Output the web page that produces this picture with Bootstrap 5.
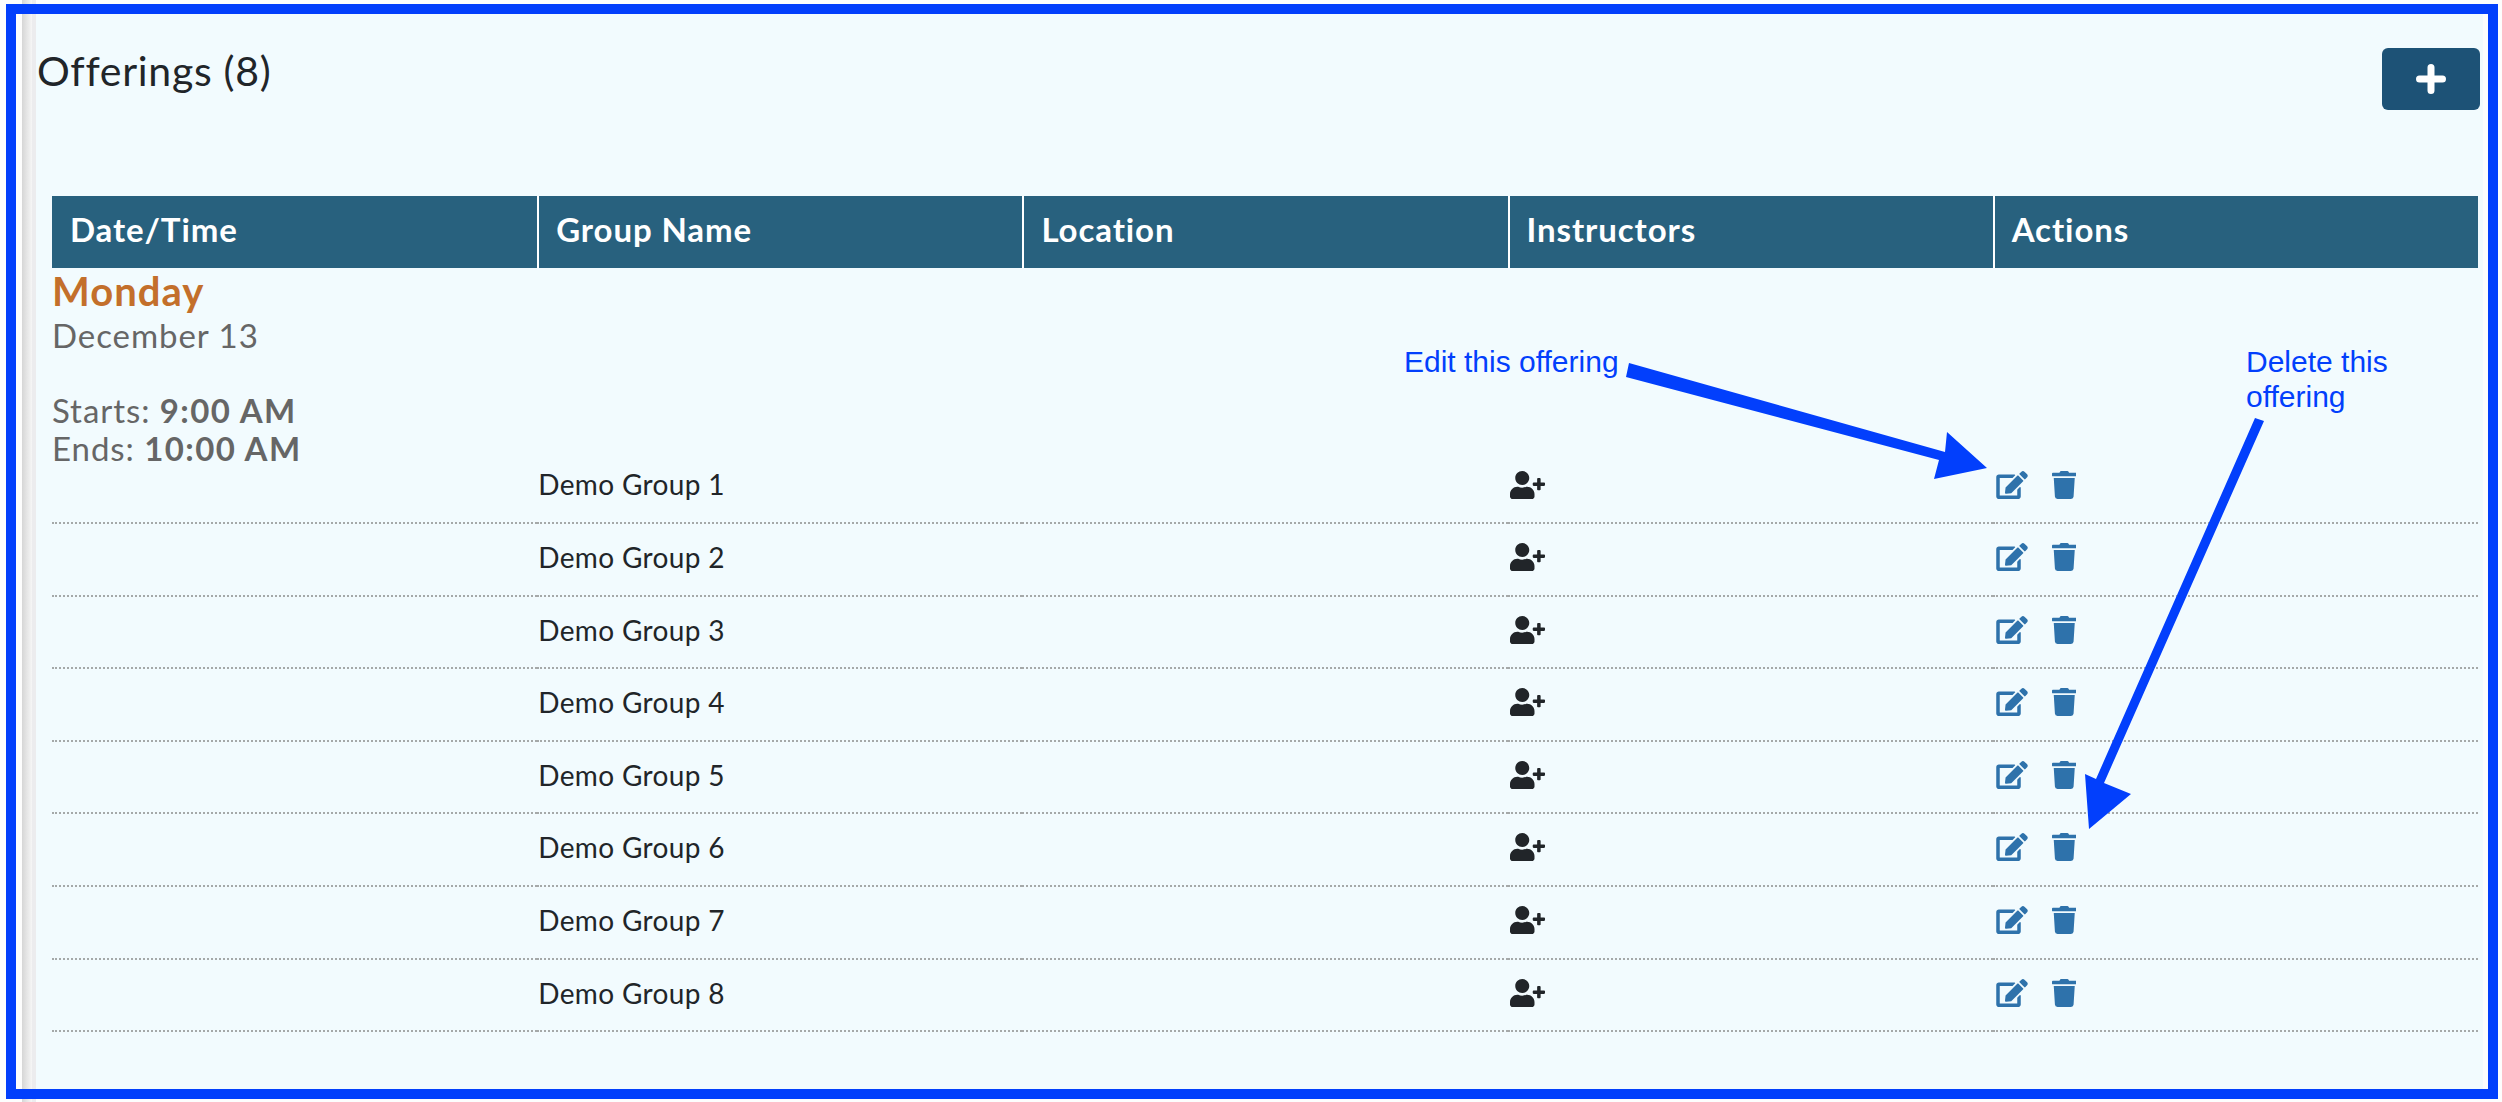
<!DOCTYPE html>
<html lang="en">
<head>
    <meta charset="UTF-8">
    <meta name="viewport" content="width=device-width, initial-scale=1.0">
    <title>Offerings</title>
    <link href="https://cdn.jsdelivr.net/npm/bootstrap@5.3.0/dist/css/bootstrap.min.css" rel="stylesheet">
    <style>
        html, body { height: 100%; }

        body {
            position: relative;
            overflow: hidden;
            font-family: Lato, "Open Sans", sans-serif;
            color: #212529;
            background-color: #fdfdfd;
            background-image: linear-gradient(to right, #d6d6d6 0, #f6f6f6 10px, #f8f8f8 10px, #ececee 10px, #ececee 14px);
            background-size: 14px 100%;
            background-position: 22px 0;
            background-repeat: no-repeat;
        }

        .shot-frame {
            height: 1095px;
            margin: 4px 4px 0 6px;
            border: 10px solid #023ffc;
            padding: 0 5px 0 20px;
        }

        .shot-panel {
            height: 100%;
            background: #f2fbfe;
            padding: 34px 3px 0 1px;
        }

        .panel-title {
            font-size: 41px;
            font-weight: 400;
            letter-spacing: .7px;
            line-height: 45px;
            margin: 0;
        }

        .btn-add {
            width: 98px;
            height: 62px;
            background: #1d5276;
            border: 0;
            border-radius: 6px;
            padding: 0;
        }

        .btn-add svg { width: 38px; height: 38px; }

        .offer-wrap { margin: 86px 2px 0 15px; }

        .offer-table {
            table-layout: fixed;
            width: 100%;
            margin: 0;
            border-collapse: separate;
            border-spacing: 0;
            --bs-table-bg: transparent;
        }

        .offer-table th {
            height: 72px;
            padding: 0 0 5px 17px;
            background: #28617e;
            color: #fff;
            font-size: 33px;
            font-weight: 700;
            letter-spacing: .9px;
            vertical-align: middle;
            border: 0;
            border-left: 2px solid #fff;
        }

        .offer-table th:first-child { border-left: 0; padding-left: 18px; }

        .offer-table td {
            height: 72.6px;
            padding: 18px 0 0 1px;
            font-size: 28px;
            letter-spacing: .35px;
            line-height: 30px;
            vertical-align: top;
            border: 0;
            border-bottom: 2px dotted #a5a9a9;
        }

        .offer-table .day-cell {
            height: 199px;
            padding: 0;
            border-bottom: 0;
            color: #666;
            font-size: 33px;
            letter-spacing: .95px;
            line-height: 37.5px;
        }

        .day-cell b { letter-spacing: 1.4px; }

        .offer-table .first-row td { height: 57px; padding-top: 2px; }

        .day-name {
            color: #c36f2b;
            font-size: 40px;
            font-weight: 700;
            letter-spacing: 1px;
            line-height: 47px;
            margin-bottom: 2px;
        }

        .ico-person { width: 35px; height: 28px; fill: #212529; margin: 1px 0 0 1px; display: block; }
        .ico-edit { width: 32px; height: 28px; fill: #2e72ab; display: block; }
        .ico-trash { width: 24.5px; height: 28px; fill: #2e72ab; display: block; }

        .actions-box { gap: 24px; padding: 1px 0 0 2px; }

        .first-row .ico-person { margin-top: 2px; }
        .first-row .actions-box { padding-top: 2px; }

        .mark-layer {
            position: absolute;
            left: 0;
            top: 0;
            width: 2502px;
            height: 1102px;
            pointer-events: none;
        }

        .mark-label {
            position: absolute;
            color: #023ffc;
            font-family: "Liberation Sans", Arial, sans-serif;
            font-size: 30px;
            line-height: 35px;
        }

        .mark-edit { left: 1404px; top: 344px; }
        .mark-delete { left: 2246px; top: 344px; }
    </style>
</head>
<body>

<svg width="0" height="0" class="d-none">
    <symbol id="i-person" viewBox="0 0 640 512"><path d="M624 208h-64v-64c0-8.8-7.2-16-16-16h-32c-8.8 0-16 7.2-16 16v64h-64c-8.8 0-16 7.2-16 16v32c0 8.8 7.2 16 16 16h64v64c0 8.8 7.2 16 16 16h32c8.8 0 16-7.2 16-16v-64h64c8.8 0 16-7.2 16-16v-32c0-8.8-7.2-16-16-16zm-400 48c70.7 0 128-57.3 128-128S294.7 0 224 0 96 57.3 96 128s57.3 128 128 128zm89.6 32h-16.7c-22.2 10.2-46.9 16-72.9 16s-50.6-5.8-72.9-16h-16.7C60.2 288 0 348.2 0 422.4V464c0 26.5 21.5 48 48 48h352c26.5 0 48-21.5 48-48v-41.6c0-74.2-60.2-134.4-134.4-134.4z"/></symbol>
    <symbol id="i-edit" viewBox="0 0 576 512"><path d="M402.6 83.2l90.2 90.2c3.8 3.8 3.8 10 0 13.8L274.4 405.6l-92.8 10.3c-12.4 1.4-22.9-9.1-21.5-21.5l10.3-92.8L388.8 83.2c3.8-3.8 10-3.8 13.8 0zm162-22.9l-48.8-48.8c-15.2-15.2-39.9-15.2-55.2 0l-35.4 35.4c-3.8 3.8-3.8 10 0 13.8l90.2 90.2c3.8 3.8 10 3.8 13.8 0l35.4-35.4c15.2-15.3 15.2-40 0-55.2zM384 346.2V448H64V128h229.8c3.2 0 6.2-1.3 8.5-3.5l40-40c7.6-7.6 2.2-20.5-8.5-20.5H48C21.5 64 0 85.5 0 112v352c0 26.5 21.5 48 48 48h352c26.5 0 48-21.5 48-48V306.2c0-10.7-12.9-16-20.5-8.5l-40 40c-2.2 2.3-3.5 5.3-3.5 8.5z"/></symbol>
    <symbol id="i-trash" viewBox="0 0 448 512"><path d="M432 32H312l-9.4-18.7A24 24 0 0 0 281.1 0H166.8a23.72 23.72 0 0 0-21.4 13.3L136 32H16A16 16 0 0 0 0 48v32a16 16 0 0 0 16 16h416a16 16 0 0 0 16-16V48a16 16 0 0 0-16-16zM53.2 467a48 48 0 0 0 47.9 45h245.8a48 48 0 0 0 47.9-45L416 128H32z"/></symbol>
</svg>

<div class="shot-frame">
    <div class="shot-panel">
        <div class="d-flex justify-content-between align-items-start">
            <h2 class="panel-title">Offerings (8)</h2>
            <button type="button" class="btn btn-add d-flex align-items-center justify-content-center">
                <svg viewBox="0 0 38 38"><path d="M19 7.5v23M7.5 19h23" stroke="#fff" stroke-width="7" stroke-linecap="round" fill="none"/></svg>
            </button>
        </div>

        <div class="offer-wrap">
            <table class="table offer-table">
                <thead>
                    <tr>
                        <th>Date/Time</th>
                        <th>Group Name</th>
                        <th>Location</th>
                        <th>Instructors</th>
                        <th>Actions</th>
                    </tr>
                </thead>
                <tbody id="offerRows">
                    <tr>
                        <td colspan="5" class="day-cell">
                            <div class="day-name">Monday</div>
                            <div>December 13</div>
                            <div>&nbsp;</div>
                            <div>Starts: <b>9:00 AM</b></div>
                            <div>Ends: <b>10:00 AM</b></div>
                        </td>
                    </tr>
                </tbody>
            </table>
        </div>
    </div>
</div>

<svg class="mark-layer" viewBox="0 0 2502 1102">
    <polygon fill="#023ffc" points="1629,363 1945,452 1947,432 1987,468 1934,479 1939,460 1626,377"/>
    <polygon fill="#023ffc" points="2255,418 2264,421 2104,783 2131,794 2089,829 2085,774 2096,779"/>
</svg>
<div class="mark-label mark-edit">Edit this offering</div>
<div class="mark-label mark-delete">Delete this<br>offering</div>

<script src="https://cdn.jsdelivr.net/npm/bootstrap@5.3.0/dist/js/bootstrap.bundle.min.js"></script>
<script>
    const rows = document.getElementById('offerRows');
    for (let i = 1; i <= 8; i++) {
        const tr = document.createElement('tr');
        if (i === 1) tr.className = 'first-row';
        tr.innerHTML = `
            <td></td>
            <td>Demo Group ${i}</td>
            <td></td>
            <td><svg class="ico-person"><use href="#i-person"/></svg></td>
            <td><div class="d-flex actions-box">
                <svg class="ico-edit"><use href="#i-edit"/></svg>
                <svg class="ico-trash"><use href="#i-trash"/></svg>
            </div></td>`;
        rows.appendChild(tr);
    }
</script>

</body>
</html>
